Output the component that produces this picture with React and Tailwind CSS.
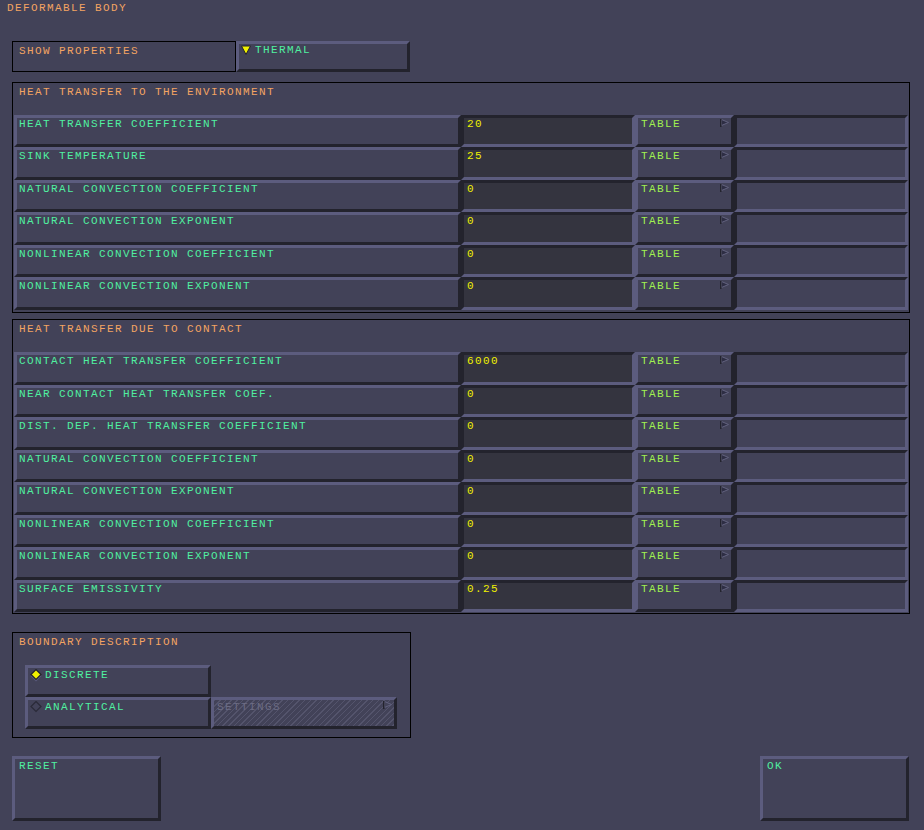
import React from 'react';

// bevel styles, classic raised / sunken look
const raised =
  'border-[3px] border-t-[#5c5c7e] border-l-[#5c5c7e] border-r-[#23232d] border-b-[#23232d] bg-[#424258]';
const sunken =
  'border-[3px] border-t-[#23232d] border-l-[#23232d] border-r-[#5c5c7e] border-b-[#5c5c7e]';

const envRows = [
  { label: 'HEAT TRANSFER COEFFICIENT', value: '20' },
  { label: 'SINK TEMPERATURE', value: '25' },
  { label: 'NATURAL CONVECTION COEFFICIENT', value: '0' },
  { label: 'NATURAL CONVECTION EXPONENT', value: '0' },
  { label: 'NONLINEAR CONVECTION COEFFICIENT', value: '0' },
  { label: 'NONLINEAR CONVECTION EXPONENT', value: '0' },
];

const contactRows = [
  { label: 'CONTACT HEAT TRANSFER COEFFICIENT', value: '6000' },
  { label: 'NEAR CONTACT HEAT TRANSFER COEF.', value: '0' },
  { label: 'DIST. DEP. HEAT TRANSFER COEFFICIENT', value: '0' },
  { label: 'NATURAL CONVECTION COEFFICIENT', value: '0' },
  { label: 'NATURAL CONVECTION EXPONENT', value: '0' },
  { label: 'NONLINEAR CONVECTION COEFFICIENT', value: '0' },
  { label: 'NONLINEAR CONVECTION EXPONENT', value: '0' },
  { label: 'SURFACE EMISSIVITY', value: '0.25' },
];

const Flag = ({ fill = '#2e2e44' }) => (
  <svg width="9" height="8" viewBox="0 0 9 8" className="absolute right-[2px] top-[1px]">
    <polygon points="1.5,0.5 8.5,3.5 1.5,6.5" fill={fill} stroke="#62627f" strokeWidth="1" />
    <rect x="0" y="0" width="1.5" height="8" fill="#23232d" />
  </svg>
);

const Diamond = ({ on }) => (
  <svg width="12" height="13" viewBox="0 0 12 13" className="shrink-0">
    <polygon points="6,1.5 11.5,7 6,12.5 0.5,7" fill={on ? '#5c5c7e' : 'none'} />
    <polygon
      points="6,0.5 11,5.5 6,10.5 1,5.5"
      fill={on ? '#f0f000' : '#424258'}
      stroke={on ? '#23232d' : '#2a2a38'}
      strokeWidth="1.2"
    />
  </svg>
);

const Row = ({ label, value, tall }) => (
  <div className={`flex ${tall ? 'h-[33px]' : 'h-[32px]'}`}>
    <div className={`${raised} w-[447px] pl-[2px] pt-[1px] text-[#50f0a0]`}>{label}</div>
    <div className={`${sunken} w-[174px] bg-[#34343f] pl-[3px] pt-[1px] text-[#f0f000]`}>{value}</div>
    <div className={`${raised} relative w-[99px] pl-[3px] pt-[1px] text-[#a0f050]`}>
      TABLE
      <Flag />
    </div>
    <div className={`${sunken} w-[174px] bg-[#424258]`}></div>
  </div>
);

const Group = ({ title, rows, offset, className }) => (
  <div className={`ml-[12px] w-[898px] border border-black px-[1px] ${className}`}>
    <div className="h-[32px] pl-[5px] pt-[4px] text-[#f4a462]">{title}</div>
    {rows.map((r, i) => (
      <Row key={i} label={r.label} value={r.value} tall={(i + offset) % 2 === 1} />
    ))}
  </div>
);

export default function App() {
  return (
    <div className="w-[924px] h-[830px] overflow-hidden bg-[#424258] font-['Liberation_Mono',monospace] text-[11px] leading-[11px] tracking-[1.4px]">
      <div className="h-[41px] pl-[7px] pt-[3px] text-[#f4a462]">DEFORMABLE BODY</div>

      <div className="flex ml-[12px] h-[31px]">
        <div className="w-[224px] border border-black pl-[6px] pt-[4px] text-[#f4a462]">SHOW PROPERTIES</div>
        <div className={`${raised} w-[174px] flex items-start gap-[4px] pl-[2px] pt-[1px] text-[#50f0a0]`}>
          <svg width="10" height="10" viewBox="0 0 10 10" className="shrink-0">
            <polygon points="0.5,1 9.5,1 5,9.5" fill="#f0f000" stroke="#23232d" strokeWidth="1" />
          </svg>
          <span>THERMAL</span>
        </div>
      </div>

      <Group title="HEAT TRANSFER TO THE ENVIRONMENT" rows={envRows} offset={0} className="mt-[10px] pb-[2px]" />
      <Group title="HEAT TRANSFER DUE TO CONTACT" rows={contactRows} offset={1} className="mt-[6px] pb-[1px]" />

      <div className="ml-[12px] mt-[18px] w-[399px] h-[106px] border border-black">
        <div className="h-[32px] pl-[6px] pt-[4px] text-[#f4a462]">BOUNDARY DESCRIPTION</div>
        <div className="ml-[12px] flex flex-col">
          <div className={`${raised} w-[186px] h-[32px] flex items-start gap-[3px] pl-[2px] pt-[1px] text-[#50f0a0]`}>
            <Diamond on />
            <span className="pt-[1px]">DISCRETE</span>
          </div>
          <div className="flex">
            <div className={`${raised} w-[186px] h-[32px] flex items-start gap-[3px] pl-[2px] pt-[1px] text-[#50f0a0]`}>
              <Diamond />
              <span className="pt-[1px]">ANALYTICAL</span>
            </div>
            <div
              className={`${raised} relative w-[186px] h-[32px] pl-[3px] pt-[2px] text-[#6c6c84] bg-[repeating-linear-gradient(135deg,#54546c_0px,#54546c_1px,transparent_1px,transparent_4px)]`}
            >
              SETTINGS
              <Flag fill="#424258" />
            </div>
          </div>
        </div>
      </div>

      <div className="mt-[18px] flex justify-between pl-[12px] pr-[15px]">
        <div className={`${raised} w-[149px] h-[65px] pl-[4px] pt-[2px] text-[#50f0a0]`}>RESET</div>
        <div className={`${raised} w-[149px] h-[65px] pl-[4px] pt-[2px] text-[#50f0a0]`}>OK</div>
      </div>
    </div>
  );
}
